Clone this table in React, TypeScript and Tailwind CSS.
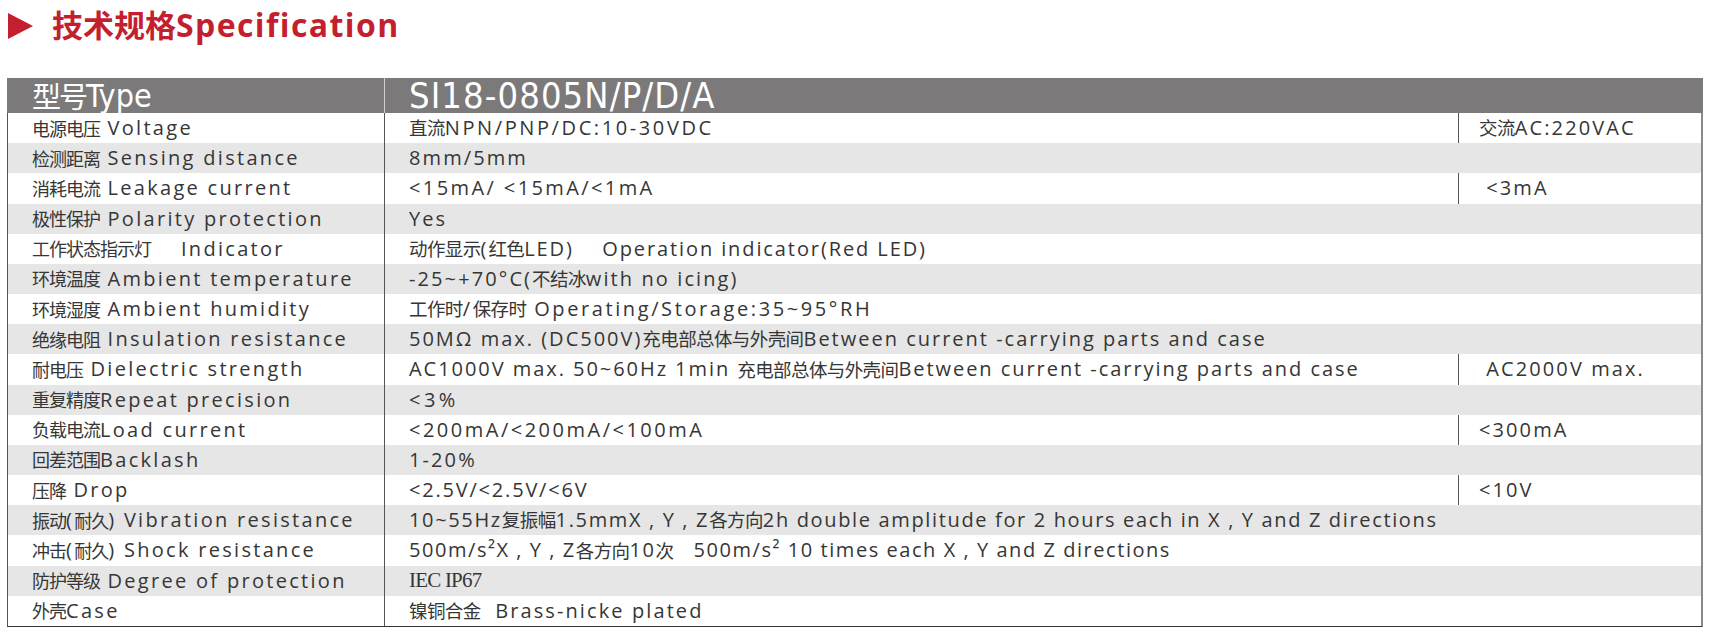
import type { ReactNode } from 'react';

type Row = { label: string; value: ReactNode; extra?: string; track?: string };

const rows: Row[] = [
  { label: '电源电压 Voltage', value: '直流NPN/PNP/DC:10-30VDC', extra: '交流AC:220VAC', track: 'tracking-[2.6px]' },
  { label: '检测距离 Sensing distance', value: '8mm/5mm' },
  { label: '消耗电流 Leakage current', value: '<15mA/ <15mA/<1mA', extra: ' <3mA', track: 'tracking-[2.4px]' },
  { label: '极性保护 Polarity protection', value: 'Yes' },
  { label: '工作状态指示灯    Indicator', value: '动作显示(红色LED)    Operation indicator(Red LED)', track: 'tracking-[1.9px]' },
  { label: '环境温度 Ambient temperature', value: '-25~+70°C(不结冰with no icing)' },
  { label: '环境湿度 Ambient humidity', value: '工作时/保存时 Operating/Storage:35~95°RH', track: 'tracking-[2.6px]' },
  {
    label: '绝缘电阻 Insulation resistance',
    value: '50MΩ max. (DC500V)充电部总体与外壳间Between current -carrying parts and case',
    track: 'tracking-[2px]',
  },
  {
    label: '耐电压 Dielectric strength',
    value: 'AC1000V max. 50~60Hz 1min 充电部总体与外壳间Between current -carrying parts and case',
    extra: ' AC2000V max.',
    track: 'tracking-[1.95px]',
  },
  { label: '重复精度Repeat precision', value: '<3%', track: 'tracking-[3.5px]' },
  { label: '负载电流Load current', value: '<200mA/<200mA/<100mA', extra: '<300mA', track: 'tracking-[2.5px]' },
  { label: '回差范围Backlash', value: '1-20%' },
  { label: '压降 Drop', value: '<2.5V/<2.5V/<6V', extra: '<10V', track: 'tracking-[1.8px]' },
  {
    label: '振动(耐久) Vibration resistance',
    value: '10~55Hz复振幅1.5mmX , Y , Z各方向2h double amplitude for 2 hours each in X , Y and Z directions',
    track: 'tracking-[1.65px]',
  },
  {
    label: '冲击(耐久) Shock resistance',
    value: '500m/s²X , Y , Z各方向10次   500m/s² 10 times each X , Y and Z directions',
    track: 'tracking-[1.55px]',
  },
  {
    label: '防护等级 Degree of protection',
    value: <span className="font-['Liberation_Serif',serif] text-[21px] tracking-[-0.8px]">IEC IP67</span>,
  },
  { label: '外壳Case', value: '镍铜合金  Brass-nicke plated' },
];

const CJK = /[\u2E80-\u9FFF\u3000-\u303F\uFF00-\uFFEF]/;

// split a string into cjk / latin runs so each gets its own size and spacing
function Mixed({ text, track, label }: { text: string; track?: string; label?: boolean }) {
  const parts = text.split(/([\u2E80-\u9FFF\u3000-\u303F\uFF00-\uFFEF]+)/).filter(Boolean);
  const latin = label ? 'tracking-[2.3px]' : track ?? 'tracking-[2.1px]';
  return (
    <>
      {parts.map((p, i) =>
        CJK.test(p) ? (
          <span
            key={i}
            className={`font-['Noto_Sans_CJK_SC',sans-serif] ${label ? 'text-[18px] tracking-[-1px]' : 'text-[18.5px] tracking-[-0.6px]'}`}
          >
            {p}
          </span>
        ) : (
          <span key={i} className={`font-['Open_Sans','Noto_Sans_CJK_SC',sans-serif] text-[20px] ${latin}`}>
            {p}
          </span>
        ),
      )}
    </>
  );
}

export default function App() {
  return (
    <div className="w-[1710px] h-[634px] bg-white overflow-hidden text-[#363636]">
      <div className="flex items-center h-[50px] pl-[8px] gap-[19px]">
        <svg width="25" height="26" viewBox="0 0 25 26" className="mt-[2px]">
          <polygon points="0,0 25,13 0,26" fill="#c41f2f" />
        </svg>
        <h1 className="flex items-baseline font-bold text-[#c41f2f] whitespace-pre -mt-[2px]">
          <span className="font-['Noto_Sans_CJK_SC',sans-serif] text-[31px] leading-none">技术规格</span>
          <span className="font-['Open_Sans',sans-serif] text-[32px] tracking-[1.4px] leading-none">Specification</span>
        </h1>
      </div>

      <div className="mt-[28px] ml-[7px] w-[1696px]">
        <div className="flex h-[35px] bg-[#7b797a] text-white">
          <div className="w-[378px] pl-[25px] flex items-center border-r border-[#d0cfcf]">
            <span className="font-['Noto_Sans_CJK_SC',sans-serif] text-[29px] tracking-[-2px] leading-none">型号</span>
            <span className="font-['Liberation_Sans_Narrow','DejaVu_Sans_Condensed',sans-serif] text-[32px] leading-none">
              Type
            </span>
          </div>
          <div className="pl-[24px] flex items-center font-['Liberation_Sans_Narrow','DejaVu_Sans_Condensed',sans-serif] text-[36px] tracking-[1.1px] leading-none">
            SI18-0805N/P/D/A
          </div>
        </div>

        <div className="h-[514px] flex flex-col border-l border-[#555] border-r-2 border-r-[#8a8a8a] border-b border-b-[#333]">
          {rows.map((r, i) => (
            <div key={i} className={`flex-1 flex min-h-0 ${i % 2 === 1 ? 'bg-[#e6e6e6]' : 'bg-white'}`}>
              <div className="w-[377px] shrink-0 pl-[24px] flex items-center border-r border-[#555] whitespace-pre">
                <Mixed text={r.label} label />
              </div>
              <div className="flex-1 pl-[24px] flex items-center whitespace-pre">
                {typeof r.value === 'string' ? <Mixed text={r.value} track={r.track} /> : r.value}
              </div>
              {r.extra && (
                <div className="w-[243px] shrink-0 pl-[20px] flex items-center border-l border-[#555] whitespace-pre">
                  <Mixed text={r.extra} />
                </div>
              )}
            </div>
          ))}
        </div>
      </div>
    </div>
  );
}
